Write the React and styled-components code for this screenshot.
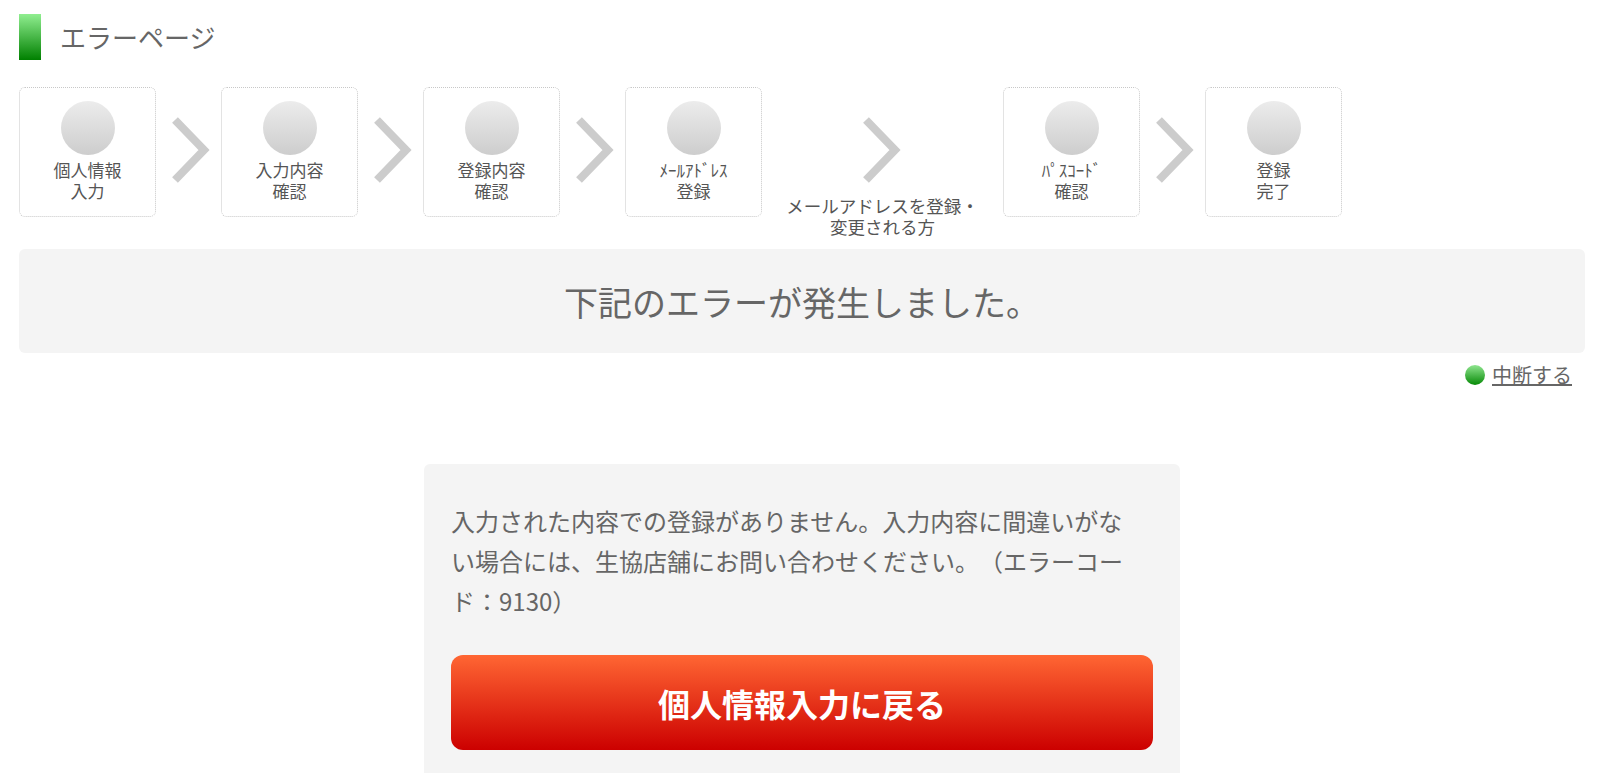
import React from "react";
import styled, { createGlobalStyle } from "styled-components";

const GlobalStyle = createGlobalStyle`
  html, body {
    margin: 0;
    padding: 0;
    overflow: hidden;
    background: #fff;
  }
  body {
    font-family: "Noto Sans CJK JP", "Noto Sans", sans-serif;
    color: #666;
    text-spacing-trim: space-all;
  }
`;

const steps = [
  { lines: ["個人情報", "入力"] },
  { lines: ["入力内容", "確認"] },
  { lines: ["登録内容", "確認"] },
  { lines: ["ﾒｰﾙｱﾄﾞﾚｽ", "登録"], note: ["メールアドレスを登録・", "変更される方"] },
  { lines: ["ﾊﾟｽｺｰﾄﾞ", "確認"] },
  { lines: ["登録", "完了"] },
];

const messageLines = [
  "入力された内容での登録がありません。入力内容に間違いがな",
  "い場合には、生協店舗にお問い合わせください。（エラーコー",
  "ド：9130）",
];

const Chevron = () => (
  <svg width="40" height="66" viewBox="0 0 40 66" style={{ overflow: "visible" }}>
    <polyline
      points="3,3 32,33 3,63"
      fill="none"
      stroke="#cccccc"
      strokeWidth="8"
      strokeLinejoin="miter"
    />
  </svg>
);

export default function App() {
  return (
    <Page>
      <GlobalStyle />
      <TitleRow>
        <TitleBar />
        <Title>エラーページ</Title>
      </TitleRow>

      <StepRow>
        {steps.map((s, i) => (
          <React.Fragment key={i}>
            {i > 0 && !steps[i - 1].note && (
              <Arrow>
                <Chevron />
              </Arrow>
            )}
            {i > 0 && steps[i - 1].note && (
              <NoteArrow>
                <Chevron />
                <NoteText>
                  {steps[i - 1].note[0]}
                  <br />
                  {steps[i - 1].note[1]}
                </NoteText>
              </NoteArrow>
            )}
            <StepBox>
              <StepCircle />
              <StepLabel>
                {s.lines[0]}
                <br />
                {s.lines[1]}
              </StepLabel>
            </StepBox>
          </React.Fragment>
        ))}
      </StepRow>

      <Banner>下記のエラーが発生しました。</Banner>

      <LinkRow>
        <Dot />
        <StopLink href="#">中断する</StopLink>
      </LinkRow>

      <Panel>
        <Message>
          {messageLines.map((l, i) => (
            <React.Fragment key={i}>
              {i > 0 && <br />}
              {l}
            </React.Fragment>
          ))}
        </Message>
        <BackButton>個人情報入力に戻る</BackButton>
      </Panel>
    </Page>
  );
}

const Page = styled.div`
  width: 1566px;
  padding: 14px 0 40px 19px;
`;

const TitleRow = styled.div`
  display: flex;
  align-items: center;
  gap: 19px;
`;

const TitleBar = styled.div`
  width: 22px;
  height: 46px;
  background: linear-gradient(to bottom, #90ee90, #008000);
`;

const Title = styled.h1`
  margin: 0;
  font-size: 26px;
  font-weight: normal;
  color: #666;
  line-height: 46px;
`;

const StepRow = styled.div`
  display: flex;
  align-items: flex-start;
  margin-top: 27px;
`;

const StepBox = styled.div`
  box-sizing: border-box;
  width: 137px;
  height: 130px;
  border: 1px dotted #c8c8c8;
  border-radius: 6px;
  display: flex;
  flex-direction: column;
  align-items: center;
  padding-top: 13px;
`;

const StepCircle = styled.div`
  width: 54px;
  height: 54px;
  border-radius: 50%;
  background: linear-gradient(to bottom, #ececec, #cdcdcd);
`;

const StepLabel = styled.div`
  margin-top: 4px;
  font-size: 17px;
  line-height: 21px;
  text-align: center;
  color: #555;
`;

const Arrow = styled.div`
  width: 65px;
  display: flex;
  justify-content: center;
  padding-left: 6px;
  box-sizing: border-box;
  margin-top: 30px;
`;

const NoteArrow = styled.div`
  width: 241px;
  display: flex;
  flex-direction: column;
  align-items: center;
  margin-top: 30px;
`;

const NoteText = styled.div`
  margin-top: 12px;
  font-size: 17.5px;
  line-height: 21px;
  text-align: center;
  color: #555;
`;

const Banner = styled.div`
  margin-top: 12px;
  height: 104px;
  background: #f4f4f4;
  border-radius: 6px;
  display: flex;
  align-items: center;
  justify-content: center;
  font-size: 34px;
  color: #666;
`;

const LinkRow = styled.div`
  display: flex;
  justify-content: flex-end;
  align-items: center;
  gap: 7px;
  margin-top: 8px;
  padding-right: 13px;
`;

const Dot = styled.span`
  width: 20px;
  height: 20px;
  border-radius: 50%;
  background: linear-gradient(to bottom, #8fe58f, #078a07);
`;

const StopLink = styled.a`
  font-size: 20px;
  line-height: 28px;
  color: #666;
  text-decoration: underline;
`;

const Panel = styled.div`
  box-sizing: border-box;
  width: 756px;
  margin: 75px auto 0;
  background: #f4f4f4;
  border-radius: 6px;
  padding: 37px 27px 40px;
`;

const Message = styled.p`
  margin: 0;
  font-size: 24px;
  line-height: 40px;
  color: #666;
  white-space: nowrap;
`;

const BackButton = styled.button`
  display: block;
  width: 100%;
  height: 95px;
  margin-top: 34px;
  border: none;
  border-radius: 12px;
  background: linear-gradient(to bottom, #ff6633, #cc0000);
  color: #fff;
  font-family: "Noto Sans CJK JP", sans-serif;
  font-size: 32px;
  font-weight: bold;
  cursor: pointer;
`;
